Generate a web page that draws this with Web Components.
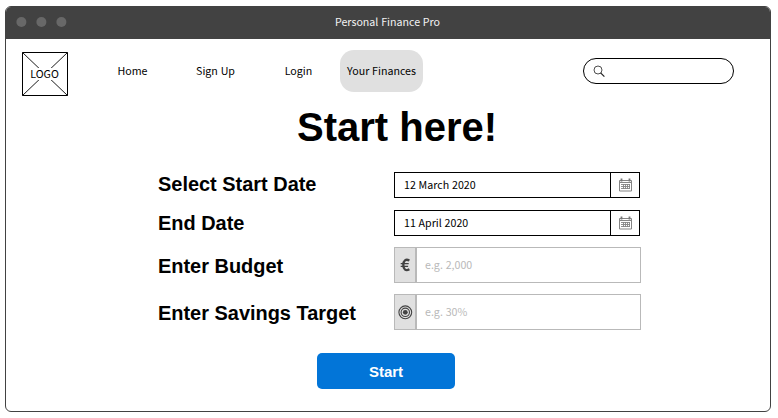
<!DOCTYPE html>
<html lang="en">
<head>
<meta charset="utf-8">
<title>Personal Finance Pro</title>
<style>
html,body{margin:0;background:#fff}
body{width:778px;height:418px;overflow:hidden;box-sizing:border-box;padding:6px 7px 6px 5px;font-family:"Noto Sans CJK SC","Noto Sans",sans-serif;font-size:10.67px;word-spacing:.4px;color:#000}
</style>
</head>
<body>
<app-window heading="Personal Finance Pro">
  <nav-bar>
    <logo-box slot="logo">LOGO</logo-box>
    <nav-link style="width:83px">Home</nav-link>
    <nav-link style="width:83px">Sign Up</nav-link>
    <nav-link style="width:83px">Login</nav-link>
    <nav-link active style="width:83px">Your Finances</nav-link>
    <search-box slot="search"></search-box>
  </nav-bar>
  <page-title>Start here!</page-title>
  <finance-form>
    <form-row label="Select Start Date" style="height:26px;margin-bottom:12px;--shift:-1px"><date-field>12 March 2020</date-field></form-row>
    <form-row label="End Date" style="height:26px;margin-bottom:11px"><date-field>11 April 2020</date-field></form-row>
    <form-row label="Enter Budget" style="height:36px;margin-bottom:11px;--shift:1px"><text-field icon="euro">e.g. 2,000</text-field></form-row>
    <form-row label="Enter Savings Target" style="height:36px;--shift:1px"><text-field icon="target">e.g. 30%</text-field></form-row>
  </finance-form>
  <action-button>Start</action-button>
</app-window>
<script>
const define = (name, render) => customElements.define(name, class extends HTMLElement {
  connectedCallback() {
    if (!this.shadowRoot) this.attachShadow({mode: 'open'}).innerHTML = render(this);
  }
});

define('app-window', el => `
<style>
:host{display:flex;flex-direction:column;box-sizing:border-box;width:766px;height:406px;border:1px solid #424242;border-radius:6px;overflow:hidden;background:#fff}
header{display:grid;grid-template-columns:1fr auto 1fr;align-items:center;height:32px;flex:none;background:#424242;color:#f2f2f2;line-height:16px}
.dots{display:block;padding:0 0 2px 10px}
svg{display:block}
.t{padding:0 1px 2px 0}
main{display:flex;flex-direction:column;flex:1}
</style>
<header><div class="dots"><svg width="52" height="10" fill="#686868"><circle cx="5.4" cy="5" r="5"/><circle cx="25.4" cy="5" r="5"/><circle cx="45.4" cy="5" r="5"/></svg></div><div class="t">${el.getAttribute('heading')}</div></header>
<main><slot></slot></main>`);

define('nav-bar', () => `
<style>
:host{display:flex;align-items:flex-start;height:61px;padding:11px 36px 0 16px;box-sizing:border-box}
.logo{padding-top:2px;width:69px}
nav{display:flex}
.search{margin-left:auto;padding-top:8px}
</style>
<div class="logo"><slot name="logo"></slot></div><nav><slot></slot></nav><div class="search"><slot name="search"></slot></div>`);

define('logo-box', () => `
<style>
:host{display:grid;width:46px;height:44px;line-height:12px}
svg,span{grid-area:1/1}
span{place-self:center;margin-right:1px;background:#fff}
</style>
<svg width="46" height="44" fill="none" stroke="#000"><path d="M.5 .5L45.5 43.5M45.5 .5L.5 43.5" stroke-width=".9"/><path d="M.5 .5h45v43H.5z"/></svg>
<span><slot></slot></span>`);

define('nav-link', () => `
<style>
:host{display:flex;align-items:center;justify-content:center;height:42px;border-radius:14px;white-space:nowrap;line-height:16px}
:host([active]){background:#e0e0e0}
</style><slot></slot>`);

define('search-box', () => `
<style>
:host{display:flex;align-items:center;box-sizing:border-box;width:151px;height:26px;border:1px solid #000;border-radius:13px;padding-left:9px}
</style>
<svg width="13" height="13" fill="none" stroke="#222"><circle cx="5" cy="5" r="4" stroke-width=".8"/><path d="M7.6 7.8L11.4 11.6" stroke-width="1.2"/></svg>`);

define('page-title', () => `
<style>
:host{display:block;font:bold 40px/48px "Liberation Sans",Arial,sans-serif;word-spacing:0;padding-left:291px;margin-top:3px;height:69px;box-sizing:border-box}
</style><slot></slot>`);

define('finance-form', () => `
<style>:host{display:block;padding-left:152px}</style><slot></slot>`);

define('form-row', el => `
<style>
:host{display:grid;grid-template-columns:236px auto;justify-content:start;align-items:center}
label{font:bold 19.95px/24px "Liberation Sans",Arial,sans-serif;word-spacing:0;transform:translateY(var(--shift,0))}
</style><label>${el.getAttribute('label')}</label><slot></slot>`);

define('date-field', () => `
<style>
:host{display:flex;box-sizing:border-box;width:246px;height:26px;border:1px solid #000;line-height:24px}
.v{flex:1;padding-left:9px}
.c{width:28px;border-left:1px solid #000;display:flex;align-items:center}
svg{display:block;margin:0 0 1px 8px}
</style>
<div class="v"><slot></slot></div>
<div class="c"><svg width="14" height="14" fill="none" stroke="#858585"><path d="M.5 2.5h12v10.5H.5z"/><path d="M.5 4.5h12"/><path d="M2.5 .5v3M10.5 .5v3" stroke="#777" stroke-width="1.8"/><path d="M2 6.5h9M2 8.5h9M2 10.5h9M4.5 6v5M6.5 6v5M8.5 6v5M10.5 6v5" stroke-width=".9"/></svg></div>`);

const icons = {
  euro: '<svg width="20" height="34" fill="none" stroke="#424242"><path d="M14.4 12.5C10.8 10.6 8.3 12.4 8.3 17S10.8 23.2 14.4 21.3" stroke-width="2.3"/><path d="M5.7 15.6h8M5.7 18.4h7.4" stroke-width="1.4"/></svg>',
  target: '<svg width="20" height="34" fill="none" stroke="#424242"><circle cx="10.3" cy="17.3" r="6.4" stroke-width="1.1"/><circle cx="10.3" cy="17.3" r="4.2" stroke-width="1.1"/><circle cx="10.3" cy="17.3" r="2.4" fill="#424242" stroke="none"/></svg>'
};
define('text-field', el => `
<style>
:host{display:flex;box-sizing:border-box;width:247px;height:36px;border:1px solid #b9b9b9;line-height:34px;color:#b9b9b9}
.i{width:20px;background:#e0e0e0;border-right:2px solid #b9b9b9}
svg{display:block}
.v{padding-left:8px}
</style>
<div class="i">${icons[el.getAttribute('icon')]}</div><div class="v"><slot></slot></div>`);

define('action-button', () => `
<style>
:host{display:flex;align-items:center;justify-content:center;width:138px;height:36px;box-sizing:border-box;padding-top:1px;margin:23px 0 0 311px;border-radius:5px;background:#0275d8;color:#fff;font:bold 15px/20px "Liberation Sans",Arial,sans-serif}
</style><slot></slot>`);
</script>
</body>
</html>
